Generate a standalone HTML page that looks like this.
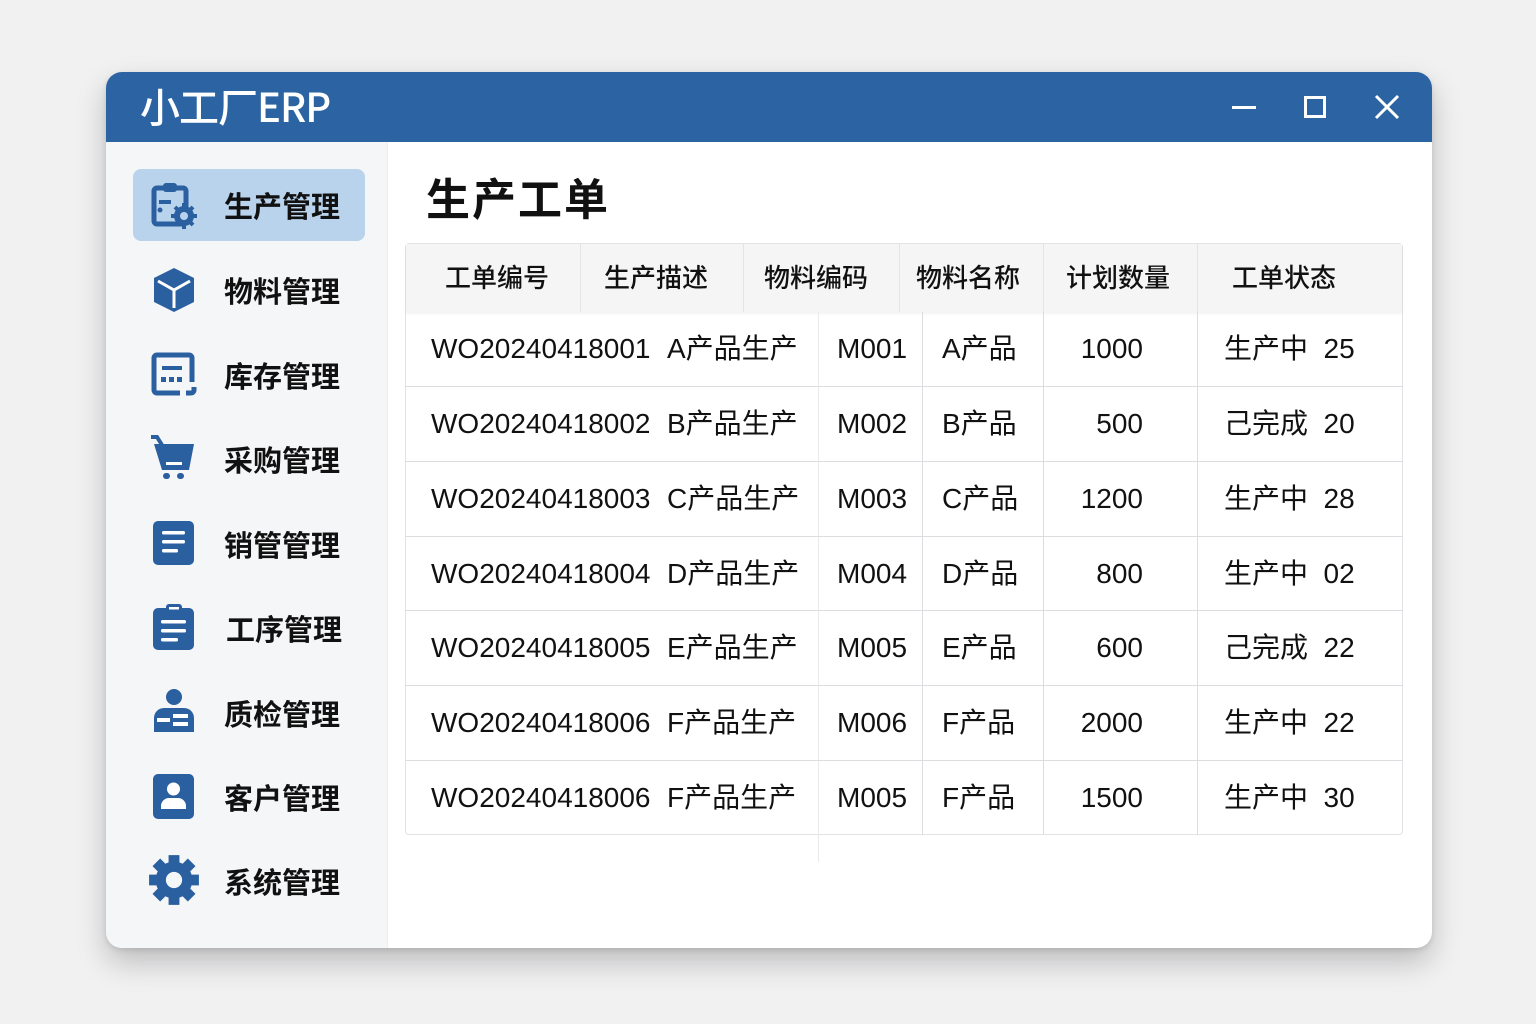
<!DOCTYPE html>
<html><head><meta charset="utf-8"><style>
*{margin:0;padding:0;box-sizing:border-box}
body{width:1536px;height:1024px;background:#f1f1f2;position:relative;overflow:hidden;font-family:"Liberation Sans","Noto Sans CJK SC",sans-serif;color:#111}
.win{position:absolute;left:106px;top:72px;width:1326px;height:876px;border-radius:16px;background:#fff;overflow:hidden;box-shadow:0 14px 30px rgba(0,0,0,.22),0 2px 6px rgba(0,0,0,.1)}
.tb{position:absolute;left:0;top:0;width:100%;height:70px;background:#2c64a3}
.tb .t{position:absolute;left:34px;top:4px;font-size:40px;color:#fff;font-family:"Noto Sans CJK SC","Liberation Sans",sans-serif;font-weight:500;letter-spacing:-1px}
.side{position:absolute;left:0;top:70px;width:282px;height:806px;background:#f5f6f8;border-right:1px solid #eceef1}
.sel{position:absolute;left:27px;top:27px;width:232px;height:72px;background:#b9d3ec;border-radius:8px}
.it{position:absolute;left:118px;font-size:29px;font-family:"Noto Sans CJK SC",sans-serif;font-weight:700;line-height:40px}
.ic{position:absolute;left:44px;width:48px;height:48px}
.a{position:absolute;white-space:nowrap;font-size:28px;line-height:40px;font-family:"Liberation Sans","Noto Sans CJK SC",sans-serif}
.h{position:absolute;font-size:26px;line-height:40px;font-family:"Noto Sans CJK SC",sans-serif;font-weight:500;white-space:nowrap}
.vl{position:absolute;width:1px;background:#dcdde0}
.hl{position:absolute;height:1px;background:#dcdde0;left:405px;width:998px}
</style></head><body>
<div class="win">
 <div class="tb"><div class="t">小工厂ERP</div>
  <div style="position:absolute;left:1126px;top:34px;width:24px;height:3px;background:#fff"></div>
  <div style="position:absolute;left:1198px;top:24px;width:22px;height:22px;border:3px solid #fff"></div>
  <svg style="position:absolute;left:1268px;top:22px" width="26" height="26"><path d="M2 2L24 24M24 2L2 24" stroke="#fff" stroke-width="3"/></svg>
 </div>
 <div class="side">
  <div class="sel"></div>
 </div>
</div>
<svg class="ic" style="left:150px;top:182px" viewBox="0 0 48 48"><rect x="4" y="6" width="32" height="36" rx="3" fill="none" stroke="#2a5fa0" stroke-width="5"/><rect x="13" y="1" width="14" height="9" rx="3" fill="#2a5fa0"/><rect x="9" y="18" width="12" height="4" fill="#2a5fa0"/><circle cx="10" cy="28" r="2.5" fill="#2a5fa0"/><circle cx="34" cy="34" r="10" fill="#2a5fa0"/><path d="M34 21v26M21 34h26M25 25l18 18M43 25L25 43" stroke="#2a5fa0" stroke-width="4"/><circle cx="34" cy="34" r="4" fill="#b9d3ec"/></svg>
<div class="it" style="left:224px;top:185px">生产管理</div>
<svg class="ic" style="left:150px;top:266px" viewBox="0 0 48 48"><path d="M24 2L44 12V36L24 46L4 36V12Z" fill="#2a5fa0"/><path d="M8 15L24 24L40 15M24 24V42" stroke="#fff" stroke-width="3" fill="none"/></svg>
<div class="it" style="left:224px;top:270px">物料管理</div>
<svg class="ic" style="left:150px;top:351px" viewBox="0 0 48 48"><path d="M30 42H7a3 3 0 0 1-3-3V7a3 3 0 0 1 3-3h32a3 3 0 0 1 3 3v24" fill="none" stroke="#2a5fa0" stroke-width="5"/><path d="M44 36v3a3 3 0 0 1-3 3h-5" fill="none" stroke="#2a5fa0" stroke-width="5"/><rect x="12" y="15" width="20" height="4" fill="#2a5fa0"/><rect x="11" y="26" width="5" height="5" fill="#2a5fa0"/><rect x="19" y="26" width="5" height="5" fill="#2a5fa0"/><rect x="27" y="26" width="5" height="5" fill="#2a5fa0"/></svg>
<div class="it" style="left:224px;top:355px">库存管理</div>
<svg class="ic" style="left:150px;top:434px" viewBox="0 0 48 48"><path d="M4 10h40l-5 26H12z" fill="#2a5fa0"/><path d="M1 3h6l5 8" stroke="#2a5fa0" stroke-width="4" fill="none"/><rect x="16" y="28" width="16" height="3" fill="#fff"/><rect x="13" y="39" width="7" height="6" rx="3" fill="#2a5fa0"/><rect x="27" y="39" width="7" height="6" rx="3" fill="#2a5fa0"/></svg>
<div class="it" style="left:224px;top:439px">采购管理</div>
<svg class="ic" style="left:150px;top:520px" viewBox="0 0 48 48"><rect x="3" y="1" width="41" height="44" rx="5" fill="#2a5fa0"/><rect x="12" y="11" width="23" height="3.5" rx="1.5" fill="#fff"/><rect x="12" y="20" width="23" height="3.5" rx="1.5" fill="#fff"/><rect x="12" y="29" width="16" height="3.5" rx="1.5" fill="#fff"/></svg>
<div class="it" style="left:224px;top:524px">销管管理</div>
<svg class="ic" style="left:150px;top:604px" viewBox="0 0 48 48"><rect x="3" y="4" width="41" height="42" rx="5" fill="#2a5fa0"/><rect x="16" y="0" width="16" height="8" rx="3" fill="#2a5fa0"/><rect x="19" y="3" width="10" height="2.5" fill="#fff"/><rect x="11" y="16" width="25" height="3.5" rx="1.5" fill="#fff"/><rect x="11" y="25" width="25" height="3.5" rx="1.5" fill="#fff"/><rect x="11" y="34" width="17" height="3.5" rx="1.5" fill="#fff"/></svg>
<div class="it" style="left:226px;top:608px">工序管理</div>
<svg class="ic" style="left:150px;top:688px" viewBox="0 0 48 48"><circle cx="24" cy="9" r="8" fill="#2a5fa0"/><path d="M4 44V30a10 10 0 0 1 10-10h20a10 10 0 0 1 10 10v14z" fill="#2a5fa0"/><rect x="7" y="30" width="13" height="4" fill="#fff"/><rect x="23" y="26" width="15" height="4" fill="#fff"/><rect x="23" y="34" width="15" height="4" fill="#fff"/></svg>
<div class="it" style="left:224px;top:693px">质检管理</div>
<svg class="ic" style="left:150px;top:773px" viewBox="0 0 48 48"><rect x="3" y="1" width="41" height="45" rx="5" fill="#2a5fa0"/><circle cx="23.5" cy="16" r="6.5" fill="#fff"/><path d="M11 36v-3a8 8 0 0 1 8-8h9a8 8 0 0 1 8 8v3z" fill="#fff"/></svg>
<div class="it" style="left:224px;top:777px">客户管理</div>
<svg class="ic" style="left:148px;top:854px;width:52px;height:52px" viewBox="0 0 48 48"><circle cx="24" cy="24" r="17" fill="#2a5fa0"/><g stroke="#2a5fa0" stroke-width="10"><path d="M24 1v46M1 24h46M7.7 7.7l32.6 32.6M40.3 7.7L7.7 40.3"/></g><circle cx="24" cy="24" r="14" fill="#2a5fa0"/><circle cx="24" cy="24" r="7.5" fill="#f5f6f8"/></svg>
<div class="it" style="left:224px;top:861px">系统管理</div>

<div style="position:absolute;left:426px;top:168px;font-size:44px;font-weight:700;font-family:'Noto Sans CJK SC',sans-serif;line-height:56px;letter-spacing:2px">生产工单</div>

<div style="position:absolute;left:405px;top:243px;width:998px;height:592px;border:1px solid #e2e3e6;border-radius:4px"></div>
<div style="position:absolute;left:406px;top:244px;width:996px;height:68px;background:#f5f5f6;box-shadow:0 2px 3px rgba(0,0,0,.05)"></div>
<div class="vl" style="left:580px;top:244px;height:68px;background:#e4e4e6"></div>
<div class="vl" style="left:743px;top:244px;height:68px;background:#e4e4e6"></div>
<div class="vl" style="left:899px;top:244px;height:68px;background:#e4e4e6"></div>
<div class="vl" style="left:1043px;top:244px;height:68px;background:#e4e4e6"></div>
<div class="vl" style="left:1197px;top:244px;height:68px;background:#e4e4e6"></div>
<div class="h" style="left:445px;top:257px">工单编号</div>
<div class="h" style="left:604px;top:257px">生产描述</div>
<div class="h" style="left:764px;top:257px">物料编码</div>
<div class="h" style="left:916px;top:257px">物料名称</div>
<div class="h" style="left:1066px;top:257px">计划数量</div>
<div class="h" style="left:1232px;top:257px">工单状态</div>
<div class="vl" style="left:818px;top:312px;height:550px;background:#e8e9eb"></div>
<div class="vl" style="left:922px;top:312px;height:523px"></div>
<div class="vl" style="left:1043px;top:312px;height:523px"></div>
<div class="vl" style="left:1197px;top:312px;height:523px"></div>
<div class="hl" style="top:386px"></div><div class="hl" style="top:461px"></div><div class="hl" style="top:536px"></div><div class="hl" style="top:610px"></div><div class="hl" style="top:685px"></div><div class="hl" style="top:760px"></div>

<div class="a" style="left:431px;top:329px">WO20240418001</div><div class="a" style="left:667px;top:329px">A产品生产</div><div class="a" style="left:837px;top:329px">M001</div><div class="a" style="left:942px;top:329px">A产品</div><div class="a" style="left:1030px;width:113px;text-align:right;top:329px">1000</div><div class="a" style="left:1224px;top:329px">生产中&nbsp;&nbsp;25</div>
<div class="a" style="left:431px;top:404px">WO20240418002</div><div class="a" style="left:667px;top:404px">B产品生产</div><div class="a" style="left:837px;top:404px">M002</div><div class="a" style="left:942px;top:404px">B产品</div><div class="a" style="left:1030px;width:113px;text-align:right;top:404px">500</div><div class="a" style="left:1224px;top:404px">己完成&nbsp;&nbsp;20</div>
<div class="a" style="left:431px;top:479px">WO20240418003</div><div class="a" style="left:667px;top:479px">C产品生产</div><div class="a" style="left:837px;top:479px">M003</div><div class="a" style="left:942px;top:479px">C产品</div><div class="a" style="left:1030px;width:113px;text-align:right;top:479px">1200</div><div class="a" style="left:1224px;top:479px">生产中&nbsp;&nbsp;28</div>
<div class="a" style="left:431px;top:554px">WO20240418004</div><div class="a" style="left:667px;top:554px">D产品生产</div><div class="a" style="left:837px;top:554px">M004</div><div class="a" style="left:942px;top:554px">D产品</div><div class="a" style="left:1030px;width:113px;text-align:right;top:554px">800</div><div class="a" style="left:1224px;top:554px">生产中&nbsp;&nbsp;02</div>
<div class="a" style="left:431px;top:628px">WO20240418005</div><div class="a" style="left:667px;top:628px">E产品生产</div><div class="a" style="left:837px;top:628px">M005</div><div class="a" style="left:942px;top:628px">E产品</div><div class="a" style="left:1030px;width:113px;text-align:right;top:628px">600</div><div class="a" style="left:1224px;top:628px">己完成&nbsp;&nbsp;22</div>
<div class="a" style="left:431px;top:703px">WO20240418006</div><div class="a" style="left:667px;top:703px">F产品生产</div><div class="a" style="left:837px;top:703px">M006</div><div class="a" style="left:942px;top:703px">F产品</div><div class="a" style="left:1030px;width:113px;text-align:right;top:703px">2000</div><div class="a" style="left:1224px;top:703px">生产中&nbsp;&nbsp;22</div>
<div class="a" style="left:431px;top:778px">WO20240418006</div><div class="a" style="left:667px;top:778px">F产品生产</div><div class="a" style="left:837px;top:778px">M005</div><div class="a" style="left:942px;top:778px">F产品</div><div class="a" style="left:1030px;width:113px;text-align:right;top:778px">1500</div><div class="a" style="left:1224px;top:778px">生产中&nbsp;&nbsp;30</div>
</body></html>
